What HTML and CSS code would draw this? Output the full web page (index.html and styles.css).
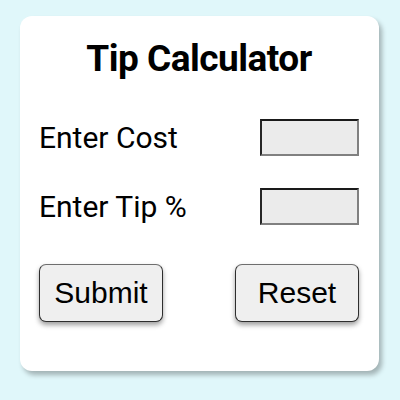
FILE: index.html
```html
<!DOCTYPE html>
<html lang="en">
<head>
<meta charset="utf-8">
<title>Tip Calculator</title>
<link rel="stylesheet" href="styles.css">
</head>
<body>
<main class="card">
  <h1 class="title">Tip Calculator</h1>
  <div class="row">
    <label class="label" for="cost">Enter Cost</label>
    <input class="field" id="cost" type="text">
  </div>
  <div class="row row-tip">
    <label class="label" for="tip">Enter Tip %</label>
    <input class="field" id="tip" type="text">
  </div>
  <div class="actions">
    <button class="btn" type="button">Submit</button>
    <button class="btn" type="button">Reset</button>
  </div>
</main>
</body>
</html>
```

FILE: styles.css
```css
html, body {
  margin: 0;
  padding: 0;
}
body {
  background: #e0f7fa;
  width: 400px;
  height: 400px;
  padding-top: 16px;
  box-sizing: border-box;
  font-family: Roboto, "Noto Sans", sans-serif;
}
.card {
  box-sizing: border-box;
  width: 359px;
  margin-left: 20px;
  background: #fff;
  border-radius: 12px;
  box-shadow: 3px 4px 5px rgba(0, 0, 0, 0.28);
  padding: 20px 20px 49px 19px;
}
.title {
  margin: 0;
  text-align: center;
  font-size: 37px;
  line-height: 46px;
  letter-spacing: -0.5px;
  font-weight: 700;
  color: #000;
}
.row {
  display: flex;
  justify-content: space-between;
  align-items: center;
  height: 37px;
  margin-top: 37px;
}
.row-tip {
  margin-top: 32px;
}
.label {
  font-size: 30px;
  line-height: 37px;
  color: #000;
}
.field {
  box-sizing: border-box;
  width: 99px;
  height: 37px;
  margin: 0;
  padding: 0 4px;
  background: #ebebeb;
  border-style: solid;
  border-width: 2px;
  border-color: #1a1a1a #808080 #808080 #262626;
  border-radius: 0;
}
.actions {
  display: flex;
  justify-content: space-between;
  margin-top: 39px;
}
.btn {
  box-sizing: border-box;
  width: 124px;
  height: 58px;
  margin: 0;
  padding: 0;
  font-family: "Liberation Sans", Arial, sans-serif;
  font-size: 30px;
  color: #000;
  background: #efefef;
  border: 1px solid #2e2e2e;
  border-top-color: #6e6e6e;
  border-radius: 7px;
  box-shadow: 0 3px 5px rgba(0, 0, 0, 0.38);
}
```
